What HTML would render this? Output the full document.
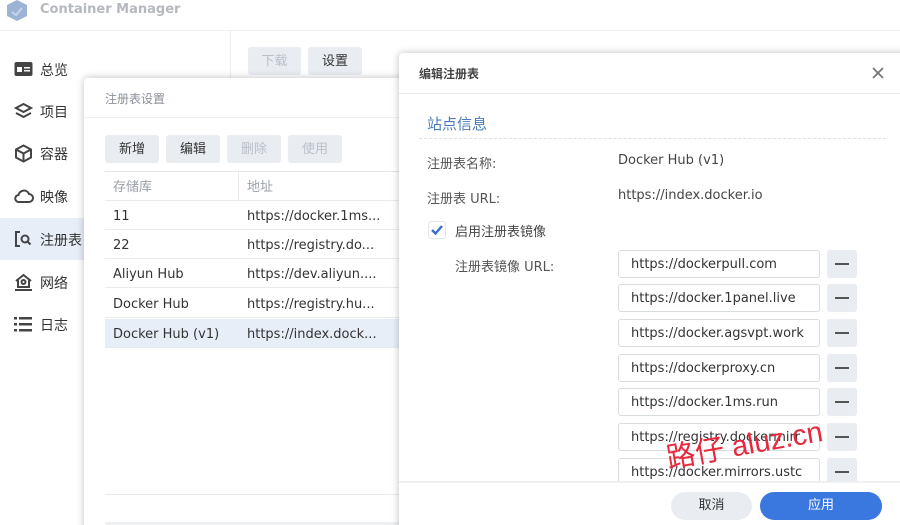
<!DOCTYPE html>
<html><head><meta charset="utf-8"><style>
*{box-sizing:border-box;margin:0;padding:0}
html,body{width:900px;height:525px;overflow:hidden}
body{background:#fff;font-family:"DejaVu Sans","Noto Sans CJK SC",sans-serif;position:relative;color:#333}
.a{position:absolute}
.nav{position:absolute;left:40px;font-size:14px;color:#333}
.ic{position:absolute;left:14px}
.btn{position:absolute;height:28px;background:#e9edf2;border-radius:3px;font-size:13px;text-align:center;line-height:29px;color:#333}
.dis{color:#b9c0c8}
.row{position:absolute;left:105px;width:300px;height:29px;border-bottom:1px solid #e8ebee;font-size:13px;line-height:31px;white-space:nowrap}
.row span{position:absolute}
.inp{position:absolute;left:618px;width:202px;height:28px;border:1px solid #d8dde3;border-radius:3px;font-size:13px;line-height:28px;padding-left:12px;color:#333;overflow:hidden;white-space:nowrap;background:#fff}
.mn{position:absolute;left:827px;width:30px;height:28px;background:#e9edf2;border-radius:3px}
.mn:after{content:"";position:absolute;left:8px;top:13px;width:14px;height:2px;background:#555}
</style></head><body>
<svg class="a" style="left:6px;top:0" width="22" height="22" viewBox="0 0 22 22"><polygon points="11,0 21,5 21,16 11,21 1,16 1,5" fill="#9db3d6"/><path d="M6 12l4 3 6-7" stroke="#c6d4ea" stroke-width="2" fill="none"/></svg>
<div class="a" style="left:40px;top:2px;font-size:13px;font-weight:bold;color:#b5b9be">Container Manager</div>
<div class="a" style="left:0;top:30px;width:900px;height:1px;background:#f1f2f4"></div>
<div class="a" style="left:0;top:218px;width:90px;height:42px;background:#e8eef8;border-radius:0 8px 8px 0"></div>
<svg class="ic" style="top:61px" width="19" height="16"><rect x="0.5" y="1" width="18" height="14" rx="2" fill="#444"/><rect x="3" y="6" width="5" height="5" fill="#fff"/><rect x="10" y="6" width="6" height="1.5" fill="#fff"/><rect x="10" y="9" width="6" height="1.5" fill="#fff"/></svg>
<div class="nav" style="top:60px">总览</div>
<svg class="ic" style="top:102px" width="19" height="18" fill="none" stroke="#444" stroke-width="2"><path d="M9.5 2L17 6l-7.5 4L2 6z"/><path d="M2 11l7.5 4 7.5-4"/></svg>
<div class="nav" style="top:102px">项目</div>
<svg class="ic" style="top:144px" width="19" height="19" fill="none" stroke="#444" stroke-width="2"><path d="M9.5 1.5L17 5.5v8L9.5 17.5 2 13.5v-8z"/><path d="M2 5.5l7.5 4 7.5-4M9.5 9.5v8"/></svg>
<div class="nav" style="top:144px">容器</div>
<svg class="ic" style="top:188px" width="20" height="16" fill="none" stroke="#444" stroke-width="2"><path d="M5 14h10a4 4 0 0 0 0-8 5.5 5.5 0 0 0-10.5 1A3.5 3.5 0 0 0 5 14z"/></svg>
<div class="nav" style="top:187px">映像</div>
<svg class="ic" style="top:230px" width="19" height="18" fill="none" stroke="#444" stroke-width="2"><path d="M6 2H2v14h4"/><circle cx="11" cy="9" r="3.5"/><path d="M13.5 11.5l3 3"/></svg>
<div class="nav" style="top:230px">注册表</div>
<svg class="ic" style="top:273px" width="19" height="18" fill="none" stroke="#444" stroke-width="2"><path d="M2 8l7.5-6 7.5 6M4 7v7h11V7"/><circle cx="9.5" cy="9" r="2"/><path d="M1 17h17"/></svg>
<div class="nav" style="top:273px">网络</div>
<svg class="ic" style="top:316px" width="19" height="16" fill="#444"><rect x="0" y="1" width="3" height="2.5"/><rect x="5" y="1" width="13" height="2.5"/><rect x="0" y="7" width="3" height="2.5"/><rect x="5" y="7" width="13" height="2.5"/><rect x="0" y="13" width="3" height="2.5"/><rect x="5" y="13" width="13" height="2.5"/></svg>
<div class="nav" style="top:315px">日志</div>
<div class="a" style="left:230px;top:30px;width:1px;height:60px;background:#eceef0"></div>
<div class="btn dis" style="left:248px;top:47px;width:53px">下载</div>
<div class="btn" style="left:308px;top:47px;width:54px">设置</div>
<div class="a" style="left:84px;top:78px;width:340px;height:460px;background:#fff;border-radius:4px;box-shadow:0 0 8px rgba(0,0,0,.25)"></div>
<div class="a" style="left:105px;top:90px;font-size:12px;color:#8a9099">注册表设置</div>
<div class="a" style="left:84px;top:117px;width:320px;height:1px;background:#eef0f2"></div>
<div class="btn" style="left:105px;top:135px;width:54px">新增</div>
<div class="btn" style="left:166px;top:135px;width:54px">编辑</div>
<div class="btn dis" style="left:227px;top:135px;width:54px">删除</div>
<div class="btn dis" style="left:288px;top:135px;width:54px">使用</div>
<div class="a" style="left:105px;top:171px;width:300px;height:1px;background:#e3e6ea"></div>
<div class="row" style="top:172px;color:#9aa0a6"><span style="left:8px">存储库</span><span style="left:142px">地址</span></div>
<div class="a" style="left:238px;top:172px;width:1px;height:29px;background:#e8ebee"></div>
<div class="row" style="top:201px"><span style="left:8px">11</span><span style="left:142px">https://docker.1ms...</span></div>
<div class="row" style="top:230px"><span style="left:8px">22</span><span style="left:142px">https://registry.do...</span></div>
<div class="row" style="top:259px"><span style="left:8px">Aliyun Hub</span><span style="left:142px">https://dev.aliyun....</span></div>
<div class="row" style="top:289px"><span style="left:8px">Docker Hub</span><span style="left:142px">https://registry.hu...</span></div>
<div class="row" style="top:319px;background:#e8eef8"><span style="left:8px">Docker Hub (v1)</span><span style="left:142px">https://index.dock...</span></div>
<div class="a" style="left:105px;top:494px;width:300px;height:1px;background:#e8ebee"></div>
<div class="a" style="left:105px;top:522px;width:300px;height:3px;background:#eef0f2"></div>
<div class="a" style="left:399px;top:53px;width:510px;height:480px;background:#fff;border-radius:4px;box-shadow:0 0 8px rgba(0,0,0,.25)"></div>
<div class="a" style="left:419px;top:65px;font-size:12px;font-weight:bold;color:#444">编辑注册表</div>
<svg class="a" style="left:872px;top:67px" width="12" height="12" stroke="#777" stroke-width="1.8"><path d="M1 1l10 10M11 1L1 11"/></svg>
<div class="a" style="left:399px;top:93px;width:501px;height:1px;background:#e6eaee"></div>
<div class="a" style="left:427px;top:113px;font-size:15px;color:#4a7ab8">站点信息</div>
<div class="a" style="left:419px;top:138px;width:467px;border-top:1px dashed #dde1e6"></div>
<div class="a" style="left:427px;top:153px;font-size:13px;color:#555">注册表名称:</div>
<div class="a" style="left:618px;top:153px;font-size:13px;color:#444">Docker Hub (v1)</div>
<div class="a" style="left:427px;top:188px;font-size:13px;color:#555">注册表 URL:</div>
<div class="a" style="left:618px;top:188px;font-size:13px;color:#444">https://index.docker.io</div>
<div class="a" style="left:428px;top:221px;width:18px;height:18px;border:1px solid #e2e6ea;border-radius:3px"></div>
<svg class="a" style="left:430px;top:223px" width="14" height="14" fill="none" stroke="#3a6fcf" stroke-width="2.4"><path d="M2 7l3.5 3.5L12 3"/></svg>
<div class="a" style="left:455px;top:221px;font-size:13px;color:#444">启用注册表镜像</div>
<div class="a" style="left:455px;top:256px;font-size:13px;color:#555">注册表镜像 URL:</div>
<div class="inp" style="top:250px">https://dockerpull.com</div><div class="mn" style="top:250px"></div>
<div class="inp" style="top:284px">https://docker.1panel.live</div><div class="mn" style="top:284px"></div>
<div class="inp" style="top:319px">https://docker.agsvpt.work</div><div class="mn" style="top:319px"></div>
<div class="inp" style="top:354px">https://dockerproxy.cn</div><div class="mn" style="top:354px"></div>
<div class="inp" style="top:388px">https://docker.1ms.run</div><div class="mn" style="top:388px"></div>
<div class="inp" style="top:423px">https://registry.dockermirr</div><div class="mn" style="top:423px"></div>
<div class="a" style="left:399px;top:457px;width:501px;height:24px;overflow:hidden">
<div class="inp" style="top:1px;left:219px">https://docker.mirrors.ustc</div><div class="mn" style="top:1px;left:428px"></div></div>
<div class="a" style="left:399px;top:481px;width:501px;height:2px;background:#eef0f2"></div>
<div class="a" style="left:671px;top:492px;width:81px;height:28px;border-radius:14px;background:#e9edf2;font-size:13px;text-align:center;line-height:28px">取消</div>
<div class="a" style="left:760px;top:492px;width:122px;height:28px;border-radius:14px;background:#3a78e0;color:#fff;font-size:13px;text-align:center;line-height:28px">应用</div>
<div class="a" style="left:670px;top:435px;font-size:29px;color:#e8283c;transform:rotate(-10deg);transform-origin:left bottom;white-space:nowrap;font-family:'Liberation Sans','Noto Sans CJK SC',sans-serif">路仔 aluz.cn</div>
</body></html>
